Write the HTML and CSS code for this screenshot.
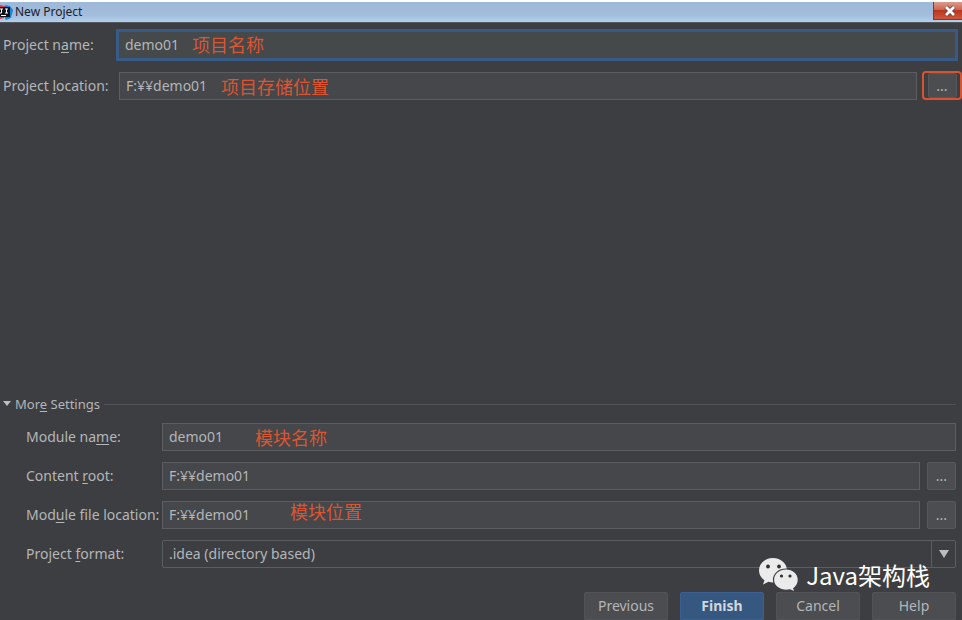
FILE: index.html
```html
<!DOCTYPE html>
<html lang="zh-CN">
<head>
<meta charset="utf-8">
<title>New Project</title>
<link rel="stylesheet" href="styles.css">
</head>
<body>
<form class="dialog">
  <header class="titlebar">
    <svg class="app-icon" width="13" height="16" viewBox="0 0 13 16" aria-hidden="true">
      <path d="M0 1l5 1-1 12-4 1z" fill="#e0365c"/>
      <path d="M5 1l5 1 3 4-2 8-5 2-2-4z" fill="#1687e0"/>
      <path d="M0 3h10v10H0z" fill="#111318"/>
      <path d="M0 5h3M1.500 5v4H0M5 5h3M6.500 5v4M5 9h3M1 11.500h5" stroke="#fff" fill="none"/>
    </svg>
    <h1 class="title">New Project</h1>
    <button type="button" class="close" aria-label="Close">
      <svg width="14" height="12" viewBox="0 0 14 12" aria-hidden="true">
        <path d="M3 2l8 8M11 2l-8 8" stroke="#6d3a3a" stroke-width="4.500"/>
        <path d="M3 2l8 8M11 2l-8 8" stroke="#fff" stroke-width="2.800"/>
      </svg>
    </button>
  </header>

  <section class="project">
    <div class="row">
      <label class="label" for="project-name">Project n<u>a</u>me:</label>
      <div class="field focused">
        <input id="project-name" type="text" value="demo01">
        <span class="note note-name">项目名称</span>
      </div>
    </div>
    <div class="row">
      <label class="label" for="project-location">Project <u>l</u>ocation:</label>
      <div class="field">
        <input id="project-location" type="text" value="F:¥¥demo01">
        <span class="note note-location">项目存储位置</span>
      </div>
      <div class="marked"><button type="button" class="browse" aria-label="Browse project location">...</button></div>
    </div>
  </section>

  <section class="settings">
    <h2 class="section-title">
      <svg width="8" height="6" viewBox="0 0 8 6" aria-hidden="true"><path d="M0 0h8L4 5z" fill="#bbbdbf"/></svg>
      <span>Mor<u>e</u> Settings</span>
    </h2>
    <div class="module">
      <div class="row">
        <label class="label" for="module-name">Module na<u>m</u>e:</label>
        <div class="field">
          <input id="module-name" type="text" value="demo01">
          <span class="note note-module">模块名称</span>
        </div>
      </div>
      <div class="row">
        <label class="label" for="content-root">Content <u>r</u>oot:</label>
        <div class="field"><input id="content-root" type="text" value="F:¥¥demo01"></div>
        <button type="button" class="browse" aria-label="Browse content root">...</button>
      </div>
      <div class="row">
        <label class="label" for="module-location">Mod<u>u</u>le file location:</label>
        <div class="field">
          <input id="module-location" type="text" value="F:¥¥demo01">
          <span class="note note-place">模块位置</span>
        </div>
        <button type="button" class="browse" aria-label="Browse module file location">...</button>
      </div>
      <div class="row">
        <label class="label" for="format">Project <u>f</u>ormat:</label>
        <div class="field combo">
          <select id="format"><option>.idea (directory based)</option></select>
          <span class="arrow"><svg width="10" height="8" viewBox="0 0 10 8" aria-hidden="true"><path d="M0 0h10L5 8z" fill="#bbbdbf"/></svg></span>
        </div>
      </div>
    </div>
  </section>

  <footer class="actions">
    <button type="button" class="button">Previous</button>
    <button type="button" class="button primary">Finish</button>
    <button type="button" class="button">Cancel</button>
    <button type="button" class="button">Help</button>
  </footer>

  <div class="watermark">
    <svg width="40" height="34" viewBox="0 0 40 34" aria-hidden="true">
      <path d="M14 0C6 0 0 5.500 0 12.500c0 4 2 7.500 5.500 9.800L4 26.500l5.500-2.700c1.500.4 3 .6 4.500.6 8 0 14-5.200 14-12S22 0 14 0z" fill="#ebebeb"/>
      <path d="M27 11c-7 0-12.500 4.700-12.500 10.700S20 32.400 27 32.400c1.500 0 2.800-.2 4-.5l5 2.100-1.200-3.600c2.800-2 4.500-5 4.500-8.700C39.300 15.700 34 11 27 11z" fill="#ebebeb" stroke="#3c3e41" stroke-width="1.200"/>
      <g fill="#2d2f31"><circle cx="9" cy="8.500" r="1.900"/><circle cx="20" cy="8.500" r="1.900"/><circle cx="22.500" cy="18" r="1.600"/><circle cx="31" cy="18" r="1.600"/></g>
    </svg>
    <span>Java架构栈</span>
  </div>
</form>
</body>
</html>
```
FILE: styles.css
```css
* {
  box-sizing: border-box;
}

body {
  margin: 0;
  background: #3c3e41;
  color: #b4b6b8;
  font: 14px/20px "Noto Sans", "Noto Sans CJK SC", sans-serif;
}

input,
select,
button {
  font: inherit;
  color: inherit;
}

u {
  text-underline-offset: 2px;
}

.dialog {
  position: relative;
  display: flex;
  flex-direction: column;
  min-height: 100vh;
}

.titlebar {
  display: flex;
  align-items: center;
  height: 23px;
  border-top: 2px solid #fff;
  border-bottom: 1px solid #53585f;
  background: linear-gradient(#9db8d8, #a3bddc 65%, #b3d0ea);
  color: #1b222c;
}

.title {
  flex: 1;
  margin: 0 0 0 2px;
  font-size: 12px;
  line-height: 18px;
  font-weight: 400;
}

.close {
  display: flex;
  align-items: center;
  justify-content: center;
  align-self: flex-start;
  width: 29px;
  height: 18px;
  padding: 0 0 0 4px;
  border: 1px solid #7c3a3a;
  border-top: 0;
  border-right: 0;
  background: linear-gradient(#dc9a8c, #cc6652 45%, #b9361f 50%, #cf563a);
}

.row {
  display: flex;
  align-items: center;
}

.label {
  flex: none;
}

.project {
  display: flex;
  flex-direction: column;
  gap: 10px;
  padding-top: 6px;
}

.project .label {
  width: 116px;
  padding-left: 3px;
}

.field {
  position: relative;
  flex: 1;
  display: flex;
  height: 28px;
  border: 1px solid #5b5d60;
  background: #45474a;
}

.field input,
.field select {
  flex: 1;
  min-width: 0;
  padding: 0 6px;
  border: 0;
  outline: 0;
  background: transparent;
}

.project .field {
  margin-left: 3px;
}

.project .focused {
  height: 32px;
  margin: 0 4px 0 0;
  border: 3px solid #385a86;
  background: #45494a;
}

.marked {
  display: flex;
  justify-content: center;
  margin-left: 5px;
  width: 40px;
  border: 2px solid #d9532f;
  border-radius: 4px;
}

.browse {
  width: 29px;
  height: 28px;
  padding: 0;
  border: 1px solid #56585b;
  border-radius: 2px;
  background: #4b4d50;
}

.marked .browse {
  height: 25px;
}

.note {
  position: absolute;
  top: 0;
  color: #dd5530;
  font-family: "Noto Sans CJK SC", sans-serif;
  font-size: 18px;
  line-height: 26px;
  white-space: nowrap;
}

.note-name {
  top: -1px;
  left: 73px;
}

.note-location {
  left: 101px;
}

.note-module {
  left: 92px;
}

.note-place {
  top: -4px;
  left: 127px;
}

.settings {
  margin-top: auto;
  padding: 0 6px 0 3px;
}

.section-title {
  display: flex;
  align-items: center;
  gap: 4px;
  margin: 0 0 9px;
  font-size: 13px;
  font-weight: 400;
}

.section-title::after {
  content: "";
  flex: 1;
  height: 1px;
  background: #505255;
}

.module {
  display: flex;
  flex-direction: column;
  gap: 11px;
  padding-left: 23px;
}

.module .label {
  width: 136px;
}

.module .browse {
  margin-left: 7px;
}

.combo {
  border-radius: 2px;
  background: #3c3e41;
}

.field select {
  appearance: none;
}

.arrow {
  display: flex;
  align-items: center;
  justify-content: center;
  width: 24px;
  border-left: 1px solid #5b5d60;
  pointer-events: none;
}

.actions {
  display: flex;
  justify-content: flex-end;
  gap: 12px;
  padding: 24px 6px 0;
}

.button {
  width: 84px;
  height: 28px;
  padding: 0;
  border: 1px solid #515356;
  border-radius: 2px 2px 0 0;
  background: #4b4d50;
}

.primary {
  border-color: #3a5f90;
  background: #365880;
  color: #d0d6dd;
  font-weight: 700;
}

.watermark {
  position: absolute;
  right: 32px;
  bottom: 28px;
  display: flex;
  align-items: center;
  gap: 7px;
  color: #fff;
  font: 24px/34px "Noto Sans CJK SC", sans-serif;
  pointer-events: none;
}
```
